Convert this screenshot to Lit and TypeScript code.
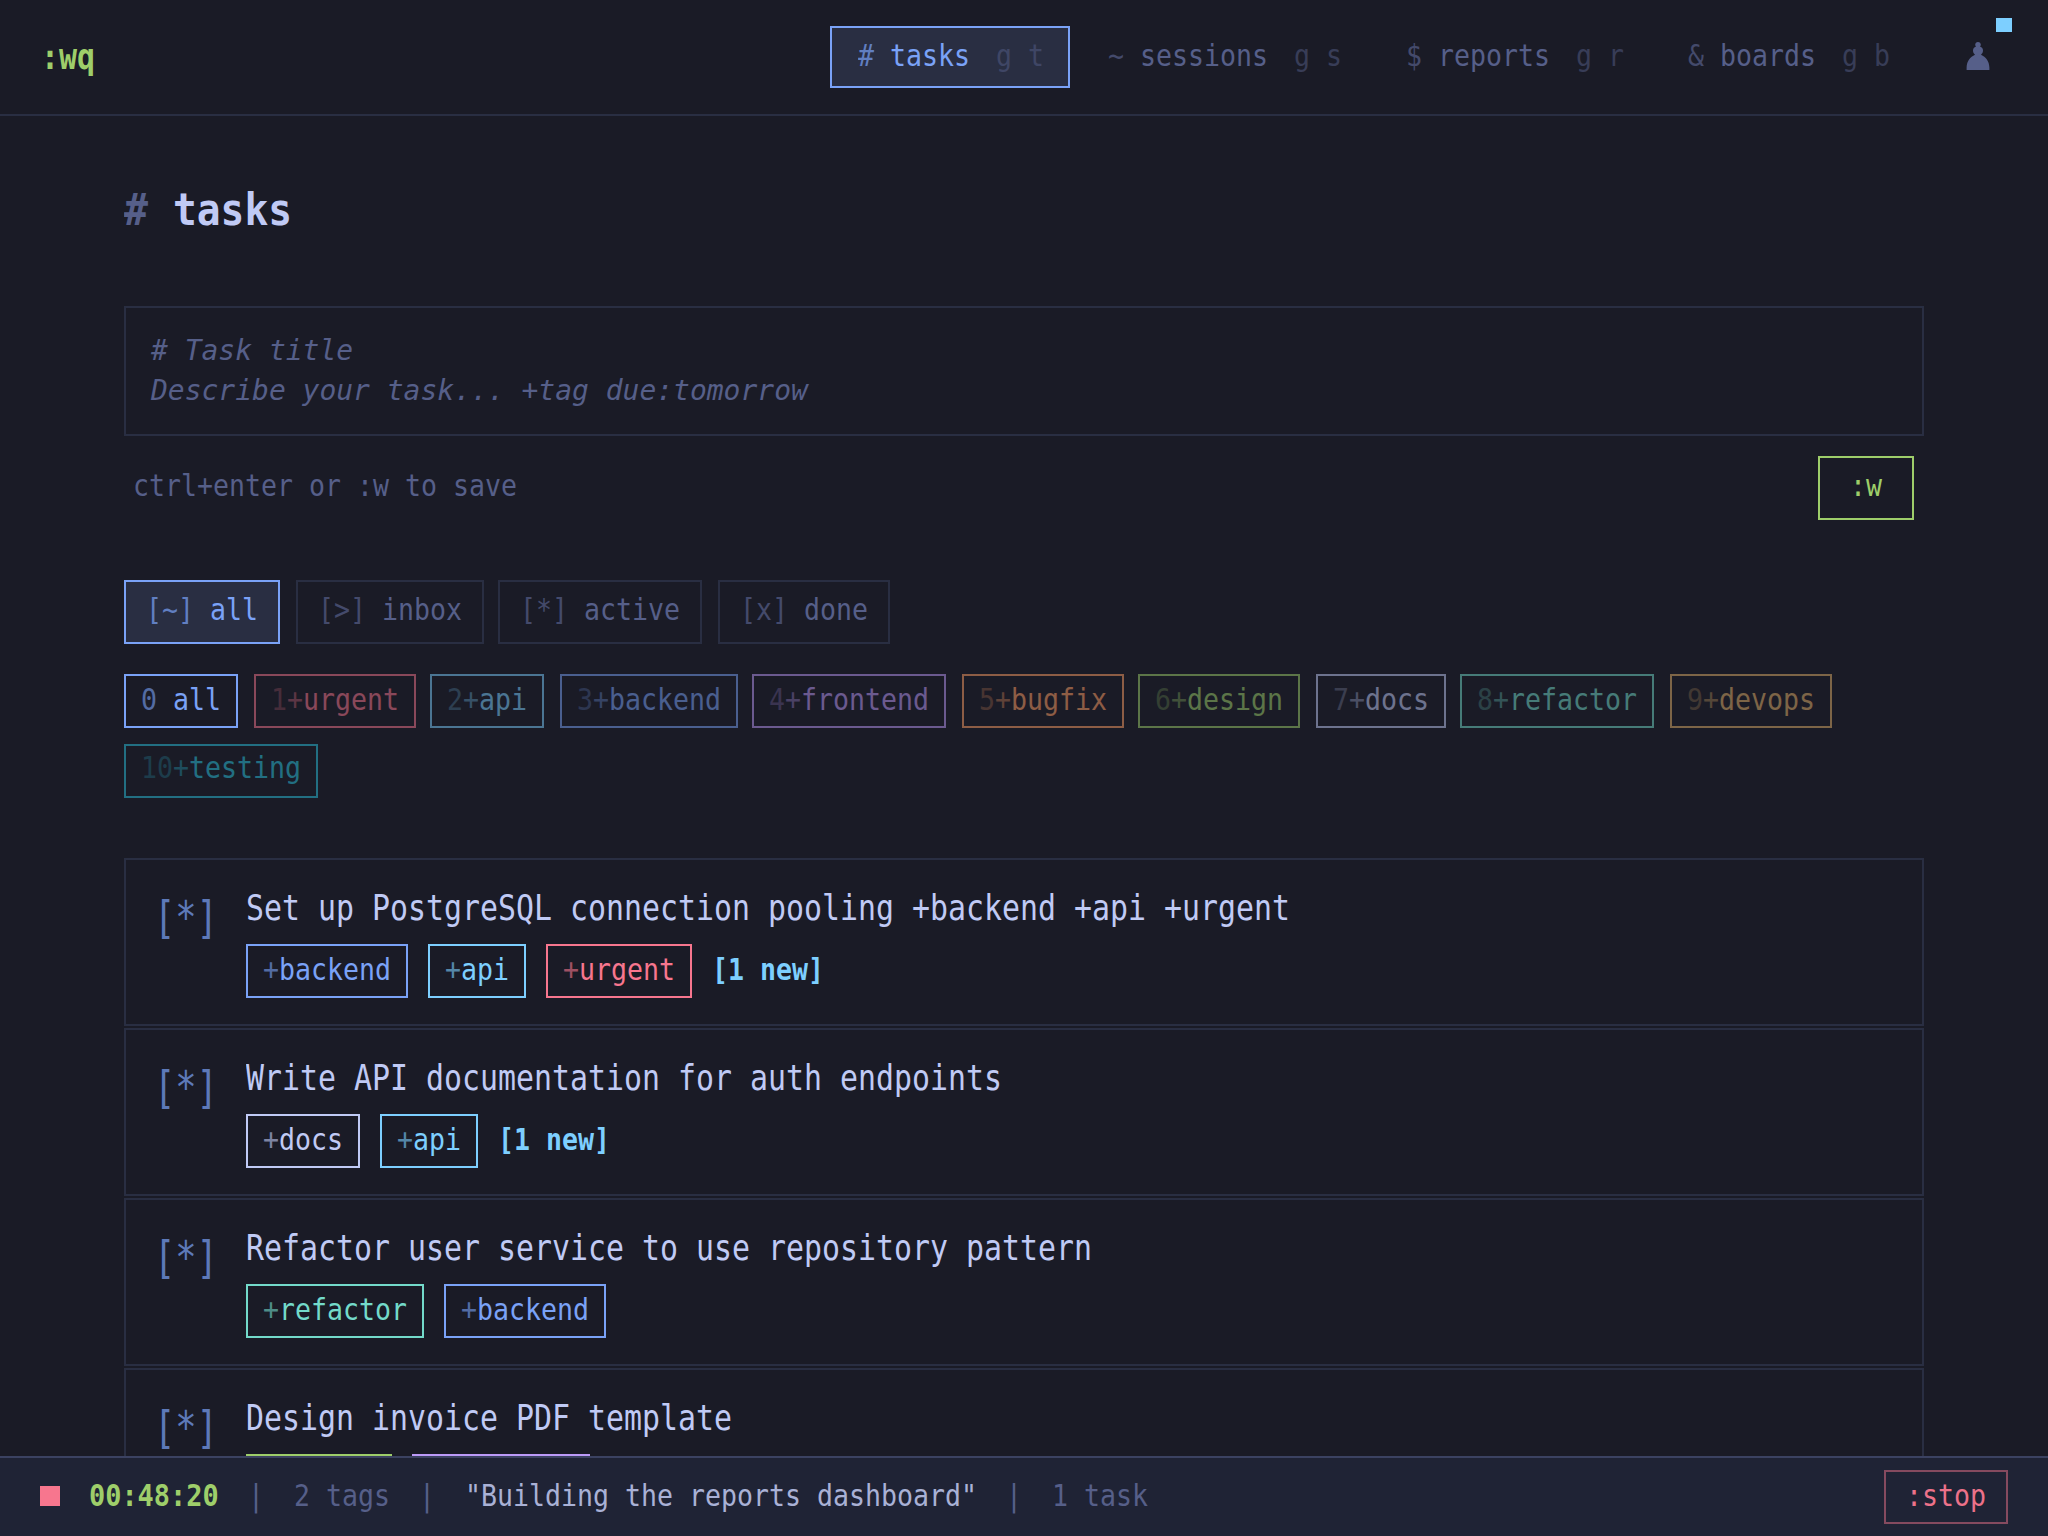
import { LitElement, html, css, nothing } from "lit";
import { customElement, property } from "lit/decorators.js";
import { styleMap } from "lit/directives/style-map.js";

/** Advance of one DejaVu Sans Mono cell, in em. */
const CELL = 0.602;

/** A run of condensed monospace text: every character takes `adv` pixels. */
@customElement("mono-run")
class MonoRun extends LitElement {
  @property() text = "";
  @property({ type: Number }) size = 30;
  @property({ type: Number }) adv = 16;
  @property({ type: Number }) line = 32;

  static styles = css`
    :host {
      display: block;
      flex: none;
    }
    .glyphs {
      display: block;
      width: max-content;
      white-space: pre;
      transform-origin: 0 0;
    }
  `;

  render() {
    const box = { width: `${this.text.length * this.adv}px`, height: `${this.line}px` };
    const glyphs = {
      fontSize: `${this.size}px`,
      lineHeight: `${this.line}px`,
      transform: `scaleX(${this.adv / (CELL * this.size)})`,
    };
    return html`<div style=${styleMap(box)}><span class="glyphs" style=${styleMap(glyphs)}>${this.text}</span></div>`;
  }
}

const NAV = [
  { icon: "#", label: "tasks", keys: "g t", on: true },
  { icon: "~", label: "sessions", keys: "g s" },
  { icon: "$", label: "reports", keys: "g r" },
  { icon: "&", label: "boards", keys: "g b" },
];

const FILTERS = [
  { mark: "[~]", label: "all", on: true },
  { mark: "[>]", label: "inbox" },
  { mark: "[*]", label: "active" },
  { mark: "[x]", label: "done" },
];

const TAGS = ["urgent", "api", "backend", "frontend", "bugfix", "design", "docs", "refactor", "devops", "testing"];

const TASKS = [
  { title: "Set up PostgreSQL connection pooling +backend +api +urgent", tags: ["backend", "api", "urgent"], fresh: 1 },
  { title: "Write API documentation for auth endpoints", tags: ["docs", "api"], fresh: 1 },
  { title: "Refactor user service to use repository pattern", tags: ["refactor", "backend"], fresh: 0 },
  { title: "Design invoice PDF template", tags: ["design", "frontend"], fresh: 0 },
];

@customElement("app-root")
class AppRoot extends LitElement {
  static styles = css`
    :host {
      display: flex;
      flex-direction: column;
      width: 2048px;
      height: 1536px;
      overflow: hidden;
      background: #1a1b26;
      color: #c0caf5;
      font-family: "DejaVu Sans Mono", "Liberation Mono", monospace;
    }
    * {
      box-sizing: border-box;
    }
    .top {
      flex: none;
      display: flex;
      align-items: center;
      height: 116px;
      padding: 0 36px 0 41px;
      border-bottom: 2px solid #292e42;
    }
    .brand {
      color: #9ece6a;
      font-weight: bold;
      margin-right: auto;
    }
    .nav {
      display: flex;
      gap: 10px;
    }
    .nav-item {
      display: flex;
      height: 62px;
      padding: 12px 23.6px 0 25.6px;
      border: 2px solid transparent;
      color: #565f89;
    }
    .nav-item.on {
      color: #7aa2f7;
      background: #292e42;
      border-color: #7aa2f7;
    }
    .nav-icon {
      margin-right: 16px;
      opacity: 0.7;
    }
    .keys {
      margin-left: 26.8px;
      color: #565f89;
      opacity: 0.5;
    }
    .user {
      position: relative;
      width: 68px;
      height: 78px;
      margin-left: 28px;
      color: #565f89;
    }
    .user svg {
      display: block;
      margin: 24px 0 0 22px;
    }
    .badge {
      position: absolute;
      right: 0;
      top: 0;
      width: 16px;
      height: 14px;
      background: #7dcfff;
    }
    .main {
      flex: 1;
      min-height: 0;
      overflow: hidden;
      padding: 70px 124px 0;
    }
    .heading {
      display: flex;
      gap: 25px;
      height: 48px;
      font-weight: bold;
    }
    .heading .hash {
      color: #565f89;
    }
    .editor {
      height: 130px;
      margin-top: 72px;
      padding: 23px 25px 0;
      border: 2px solid #292e42;
      color: #565f89;
      font-style: italic;
    }
    .save-row {
      display: flex;
      justify-content: space-between;
      height: 64px;
      margin-top: 20px;
      padding: 0 10px 0 9px;
      color: #565f89;
    }
    .save-hint {
      padding-top: 14px;
    }
    .save {
      width: 96px;
      padding: 12px 30px 0;
      border: 2px solid #9ece6a;
      color: #9ece6a;
    }
    .filters {
      display: flex;
      gap: 14px;
      margin-top: 60px;
    }
    .filter {
      display: flex;
      gap: 16px;
      height: 64px;
      padding: 12px 20px 0;
      border: 2px solid #292e42;
      color: #565f89;
    }
    .filter:nth-child(even),
    .tag-bar .tag:nth-child(even) {
      margin-left: 2px;
    }
    .filter.on {
      color: #7aa2f7;
      border-color: #7aa2f7;
      background: #292e42;
    }
    .filter .mark {
      opacity: 0.7;
    }
    .tag-bar {
      display: flex;
      flex-wrap: wrap;
      gap: 16px 14px;
      margin-top: 30px;
    }
    .tag {
      display: flex;
      height: 54px;
      padding: 8px 15px 0;
      border: 2px solid currentColor;
    }
    .tag-bar .tag {
      opacity: 0.5;
    }
    .tag-bar .tag.on {
      opacity: 1;
    }
    .tag-bar .tag.testing {
      padding-top: 6px;
    }
    .num {
      opacity: 0.4;
    }
    .tag.on .num {
      opacity: 0.6;
      margin-right: 16px;
    }
    .plus {
      opacity: 0.6;
    }
    .all,
    .backend {
      color: #7aa2f7;
    }
    .urgent {
      color: #f7768e;
    }
    .api {
      color: #7dcfff;
    }
    .frontend {
      color: #bb9af7;
    }
    .bugfix {
      color: #ff9e64;
    }
    .design {
      color: #9ece6a;
    }
    .docs {
      color: #c0caf5;
    }
    .refactor {
      color: #73daca;
    }
    .devops {
      color: #e0af68;
    }
    .testing {
      color: #2ac3de;
    }
    .tasks {
      display: flex;
      flex-direction: column;
      gap: 2px;
      margin-top: 60px;
    }
    .task {
      flex: none;
      display: flex;
      height: 168px;
      padding: 26px 28px 0;
      border: 2px solid #292e42;
    }
    .state {
      margin-top: 8px;
      width: 92px;
      color: #7aa2f7;
      opacity: 0.7;
    }
    .task-tags {
      display: flex;
      gap: 20px;
      margin-top: 14px;
    }
    .fresh {
      padding-top: 10px;
      color: #7dcfff;
      font-weight: bold;
    }
    .status {
      flex: none;
      display: flex;
      align-items: flex-start;
      height: 80px;
      padding: 12px 40px 0;
      border-top: 2px solid #3b4261;
      background: #1f2335;
      color: #565f89;
    }
    .status > mono-run {
      margin-top: 10px;
    }
    .rec {
      width: 20px;
      height: 20px;
      margin: 16px 29px 0 0;
      background: #f7768e;
    }
    .clock {
      color: #9ece6a;
      font-weight: bold;
      margin-right: 29px;
    }
    .bar {
      margin-right: 30px;
    }
    .meta {
      margin-right: 29px;
    }
    .note {
      color: #a9b1d6;
      margin-right: 29.5px;
    }
    .stop {
      margin-left: auto;
      width: 124px;
      height: 54px;
      padding: 8px 20px 0;
      border: 2px solid #8b4d62;
      color: #f7768e;
      opacity: 0.95;
    }
  `;

  private tag(name: string, num?: number) {
    return html`<div class="tag ${name}">
      ${num === undefined ? nothing : html`<mono-run class="num" text=${String(num)}></mono-run>`}
      <mono-run class="plus" text="+"></mono-run>
      <mono-run text=${name}></mono-run>
    </div>`;
  }

  render() {
    return html`
      <header class="top">
        <mono-run class="brand" text=":wq" size="35" adv="18" line="36"></mono-run>
        <nav class="nav">
          ${NAV.map(
            (n) => html`<div class="nav-item ${n.on ? "on" : ""}">
              <mono-run class="nav-icon" text=${n.icon}></mono-run>
              <mono-run text=${n.label}></mono-run>
              <mono-run class="keys" text=${n.keys}></mono-run>
            </div>`,
          )}
        </nav>
        <div class="user">
          <svg width="24" height="28" viewBox="0 0 24 28" fill="currentColor">
            <path d="M12 0C13.7 0 14.8 1.2 14.8 2.7C14.8 3.5 14.5 4.1 14 4.5C16 5.2 17 6.7 17 8.6C17 10.5 16.2 11.8 15 12.7C19.8 14.9 23.2 19 23.4 25.5L23.4 28H.6L.6 25.5C.8 19 4.2 14.9 9 12.7C7.8 11.8 7 10.5 7 8.6C7 6.7 8 5.2 10 4.5C9.5 4.1 9.2 3.5 9.2 2.7C9.2 1.2 10.3 0 12 0Z" />
          </svg>
          <span class="badge"></span>
        </div>
      </header>

      <main class="main">
        <div class="heading">
          <mono-run class="hash" text="#" size="44" adv="24" line="48"></mono-run>
          <mono-run text="tasks" size="44" adv="23.8" line="48"></mono-run>
        </div>

        <div class="editor">
          <mono-run text="# Task title" size="28" adv="16.84" line="40"></mono-run>
          <mono-run text="Describe your task... +tag due:tomorrow" size="28" adv="16.84" line="40"></mono-run>
        </div>
        <div class="save-row">
          <mono-run class="save-hint" text="ctrl+enter or :w to save"></mono-run>
          <div class="save"><mono-run text=":w"></mono-run></div>
        </div>

        <div class="filters">
          ${FILTERS.map(
            (f) => html`<div class="filter ${f.on ? "on" : ""}">
              <mono-run class="mark" text=${f.mark}></mono-run>
              <mono-run text=${f.label}></mono-run>
            </div>`,
          )}
        </div>

        <div class="tag-bar">
          <div class="tag all on">
            <mono-run class="num" text="0"></mono-run>
            <mono-run text="all"></mono-run>
          </div>
          ${TAGS.map((t, i) => this.tag(t, i + 1))}
        </div>

        <div class="tasks">
          ${TASKS.map(
            (t) => html`<div class="task">
              <mono-run class="state" text="[*]" size="44" adv="21.3" line="48"></mono-run>
              <div>
                <mono-run text=${t.title} size="35.5" adv="18" line="44"></mono-run>
                <div class="task-tags">
                  ${t.tags.map((g) => this.tag(g))}
                  ${t.fresh ? html`<mono-run class="fresh" text=${`[${t.fresh} new]`}></mono-run>` : nothing}
                </div>
              </div>
            </div>`,
          )}
        </div>
      </main>

      <footer class="status">
        <span class="rec"></span>
        <mono-run class="clock" text="00:48:20" adv="16.2"></mono-run>
        <mono-run class="bar" text="|"></mono-run>
        <mono-run class="meta" text="2 tags"></mono-run>
        <mono-run class="bar" text="|"></mono-run>
        <mono-run class="note" text='"Building the reports dashboard"'></mono-run>
        <mono-run class="bar" text="|"></mono-run>
        <mono-run text="1 task"></mono-run>
        <div class="stop"><mono-run text=":stop"></mono-run></div>
      </footer>
    `;
  }
}
